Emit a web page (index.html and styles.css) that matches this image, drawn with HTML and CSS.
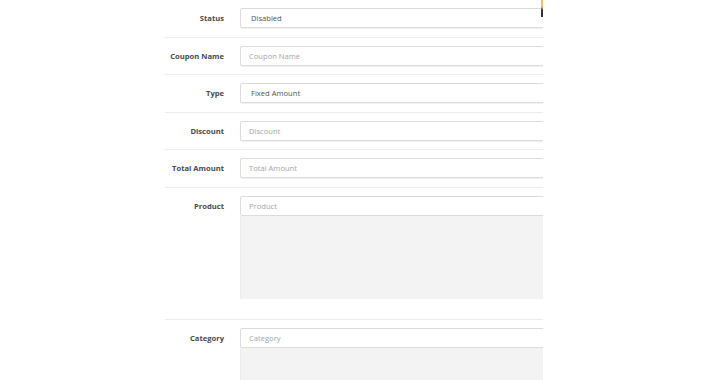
FILE: index.html
```html
<!DOCTYPE html>
<html lang="en">
<head>
    <meta charset="UTF-8">
    <title>Coupon Form</title>
    <link rel="stylesheet" href="styles.css">
</head>
<body>
    <div class="form-wrap">
        <span class="scroll-mark"></span>
        <div class="form">
            <div class="row">
                <label class="label">Status</label>
                <div class="control"><div class="field value">Disabled</div></div>
            </div>
            <div class="row">
                <label class="label">Coupon Name</label>
                <div class="control"><div class="field">Coupon Name</div></div>
            </div>
            <div class="row">
                <label class="label">Type</label>
                <div class="control"><div class="field value">Fixed Amount</div></div>
            </div>
            <div class="row">
                <label class="label">Discount</label>
                <div class="control"><div class="field">Discount</div></div>
            </div>
            <div class="row">
                <label class="label">Total Amount</label>
                <div class="control"><div class="field">Total Amount</div></div>
            </div>
            <div class="row row-tall">
                <label class="label">Product</label>
                <div class="control">
                    <div class="field">Product</div>
                    <div class="well"></div>
                </div>
            </div>
            <div class="row row-last">
                <label class="label">Category</label>
                <div class="control">
                    <div class="field">Category</div>
                    <div class="well"></div>
                </div>
            </div>
        </div>
    </div>
</body>
</html>
```

FILE: styles.css
```css
/* Page */
body {
    margin: 0;
    background: #fff;
    font-family: 'Open Sans', sans-serif;
    font-size: 7.6px;
    color: #555;
    overflow: hidden;
}

.form-wrap {
    position: relative;
    width: 378px;
    height: 380px;
    margin-left: 165px;
    overflow: hidden;
}

.scroll-mark {
    position: absolute;
    top: 0;
    right: 0;
    width: 2px;
    height: 17px;
    background: linear-gradient(#e8c36a, #e8c36a 40%, #333 60%);
}

/* Rows */
.row {
    display: flex;
    align-items: flex-start;
    padding: 8px 0 8.5px;
    border-bottom: 1px solid #ececec;
}

.row-tall {
    padding-bottom: 20px;
}

.row-last {
    border-bottom: none;
}

.label {
    flex: 0 0 59px;
    height: 20px;
    line-height: 20px;
    text-align: right;
    font-weight: 700;
    color: #4a4a4a;
}

.control {
    margin-left: 16px;
    flex: 0 0 330px;
}

.field {
    height: 18px;
    line-height: 18px;
    padding: 0 8px;
    border: 1px solid #dcdcdc;
    border-radius: 2px;
    box-shadow: 0 1px 1px rgba(0, 0, 0, 0.06);
    color: #a5a5a5;
    background: #fff;
}

.field.value {
    padding-left: 10px;
    color: #555;
}

.well {
    height: 83px;
    background: #f3f3f3;
    border-left: 1px solid #ececec;
}
```
